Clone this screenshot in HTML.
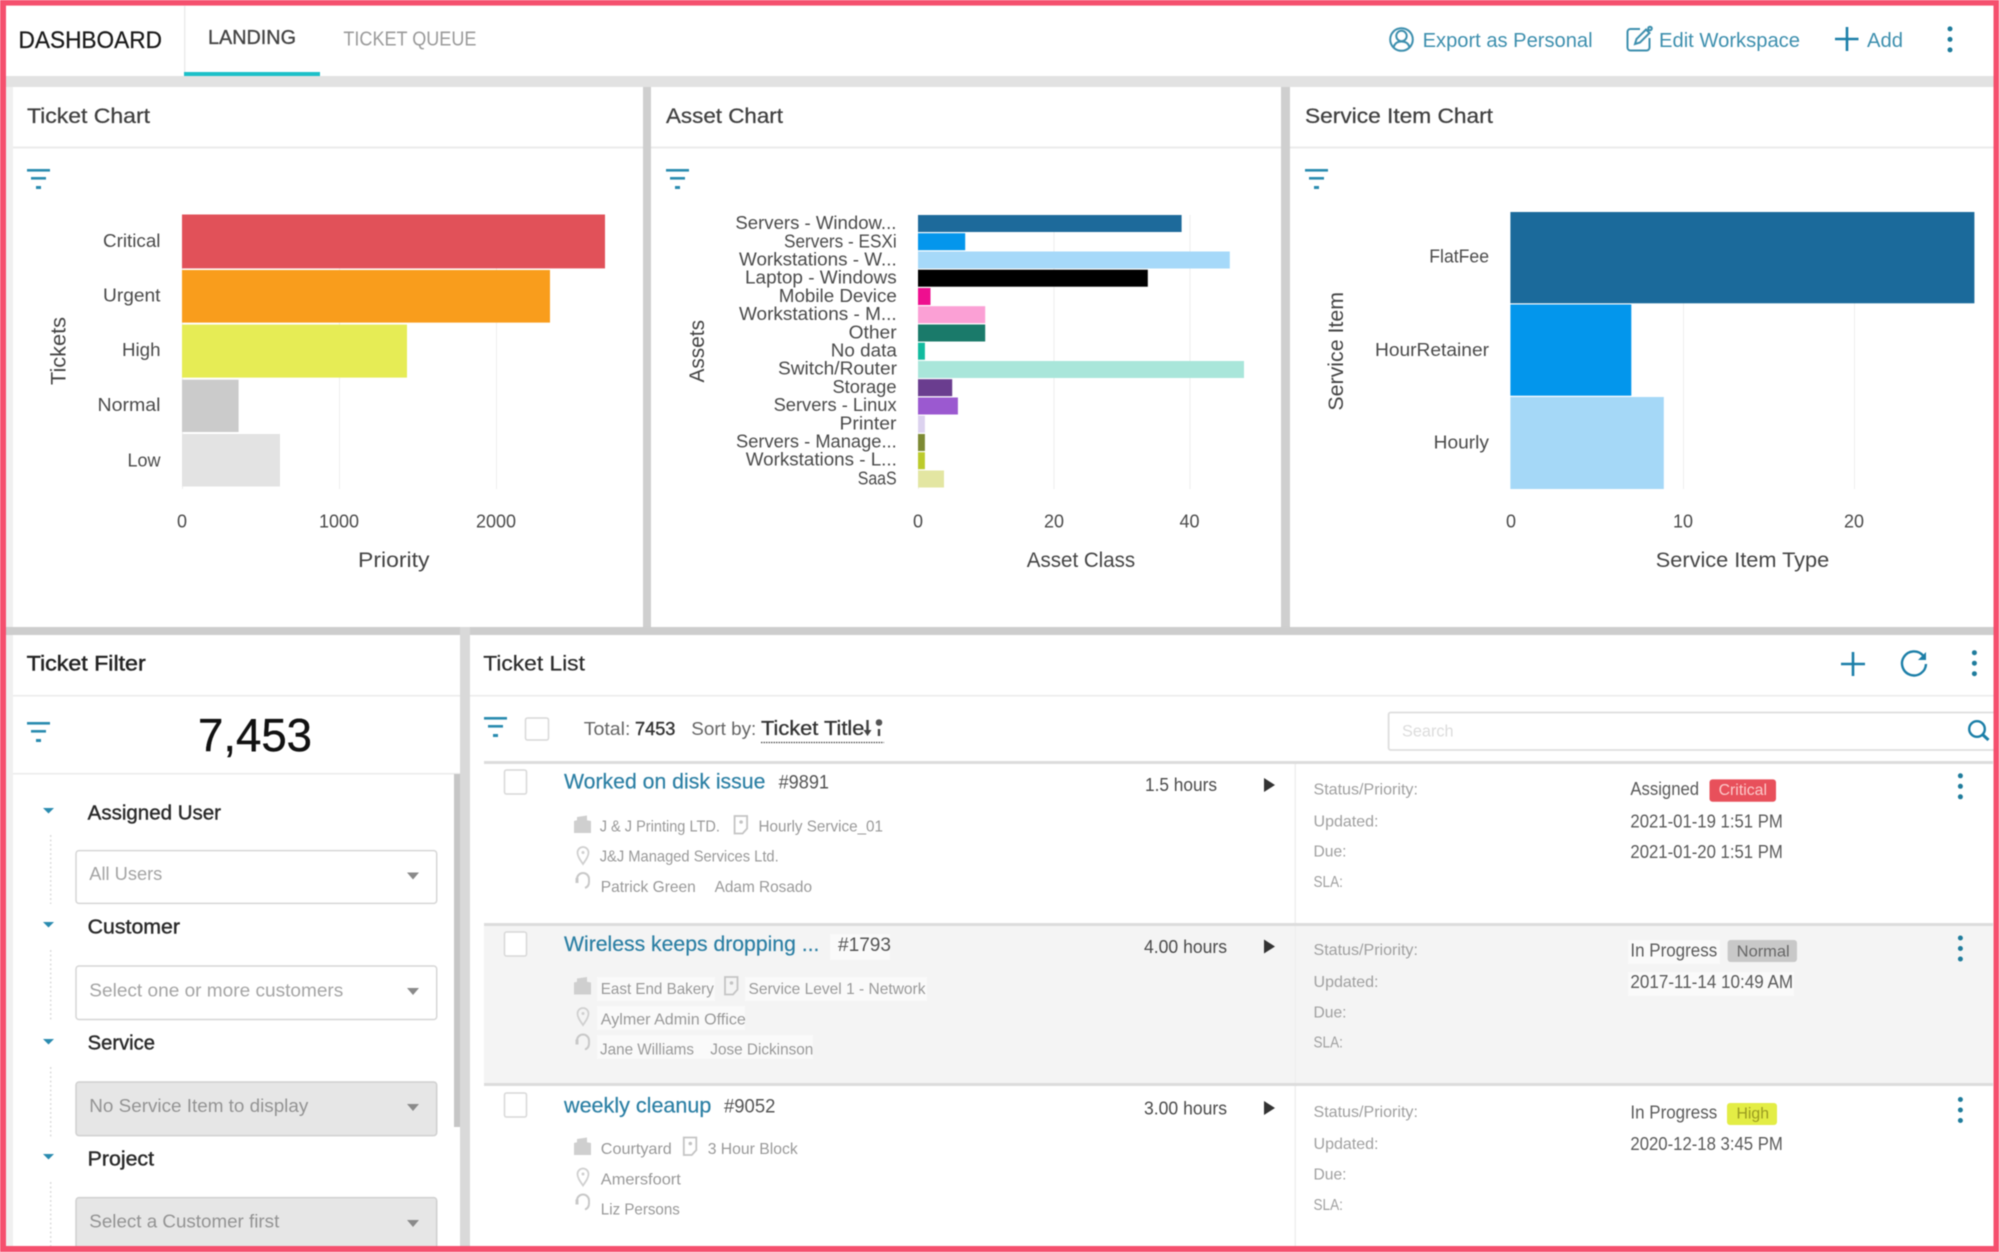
<!DOCTYPE html>
<html><head><meta charset="utf-8"><title>Dashboard</title>
<style>
html,body{margin:0;padding:0;background:#fff;width:1999px;height:1252px;overflow:hidden}
svg{display:block;filter:blur(.6px)}
text{font-family:"Liberation Sans",sans-serif;fill:#555;font-size:18px}
.t{font-size:21px;fill:#3f3f3f;stroke:#3f3f3f;stroke-width:.25px}
.a{font-size:18px;fill:#4a4a4a}
.x{font-size:21px;fill:#444}
.l{font-size:20px;fill:#2a2a2a;stroke:#2a2a2a;stroke-width:.4px}
.s{font-size:18px;fill:#a4a4a4}
.m{font-size:16px;fill:#999}
.k{font-size:16px;fill:#a0a0a0}
.v{font-size:18px;fill:#5a5a5a}
.h{font-size:21px;fill:#2b7fa4;stroke:#2b7fa4;stroke-width:.2px}
.n{font-size:19px;fill:#555}
.b{font-size:20px;fill:#3d8fae}
</style></head><body>
<svg xmlns="http://www.w3.org/2000/svg" width="1999" height="1252" viewBox="0 0 1999 1252">
<defs>
<g id="f" fill="#2a8bb0"><rect width="23" height="2.600"/><rect x="4" y="8" width="15" height="2.600"/><rect x="9" y="17" width="5" height="3"/></g>
<g id="dots" fill="#1f7c9c"><circle cy="-10.500" r="2.500"/><circle r="2.500"/><circle cy="10.500" r="2.500"/></g>
<path id="tri" d="M0 0h11l-5.500 5.500z" fill="#2a8bb0"/>
<path id="car" d="M0 0h12l-6 7z" fill="#8a8a8a"/>
<path id="play" d="M0 0l11 7-11 7z" fill="#333"/>
<path id="bld" d="M0 17.500V5.500l3-.800V1.500L13 0v4.700l4 .800v12z" fill="#cfcfcf"/>
<g id="doc" fill="none" stroke="#c4c4c4" stroke-width="1.800"><path d="M1 1h12.500v12.500L9 18.500H1z"/><circle cx="7.500" cy="7" r="1.800" fill="#c4c4c4" stroke="none"/></g>
<g id="pin" fill="none" stroke="#d0d0d0" stroke-width="1.800"><path d="M6.500 18C3 13 1 10 1 6.500a5.500 5.500 0 0 1 11 0C12 10 10 13 6.500 18z"/><circle cx="6.500" cy="6.500" r="1.500" fill="#d0d0d0" stroke="none"/></g>
<g id="hs" fill="none" stroke="#c8c8c8" stroke-width="2"><path d="M2 11V8a6 6 0 0 1 12 0v3"/><path d="M14 11c0 3-1.500 5-4 6"/><path d="M2 7v5" stroke-width="3"/></g>
<rect id="cb" width="22" height="24" rx="2" fill="#fff" stroke="#d8d8d8" stroke-width="1.500"/>
</defs>

<!-- backgrounds -->
<rect width="1999" height="1252" fill="#f0f0f0"/>
<rect y="5" width="1999" height="71" fill="#fff"/>
<rect y="76" width="1999" height="11" fill="#e2e2e2"/>
<rect x="184" y="6" width="1.500" height="70" fill="#ececec"/>
<rect x="184" y="72" width="136" height="4" fill="#1cc0c8"/>

<rect x="643" y="87" width="8" height="547" fill="#cfcfcf"/>
<rect x="1281" y="87" width="9" height="547" fill="#cfcfcf"/>
<rect y="627" width="1999" height="8" fill="#cdcdcd"/>
<rect x="460" y="627" width="10" height="625" fill="#d9d9d9"/>

<rect x="13" y="87" width="630" height="540" fill="#fff"/>
<rect x="651" y="87" width="630" height="540" fill="#fff"/>
<rect x="1290" y="87" width="709" height="540" fill="#fff"/>
<rect x="13" y="635" width="447" height="617" fill="#fff"/>
<rect x="470" y="635" width="1529" height="617" fill="#fff"/>

<g fill="#ebebeb">
<rect x="13" y="146.500" width="630" height="2"/><rect x="651" y="146.500" width="630" height="2"/><rect x="1290" y="146.500" width="709" height="2"/>
<rect x="13" y="695" width="447" height="1.500"/><rect x="470" y="695" width="1529" height="1.500"/><rect x="13" y="773" width="447" height="1.500"/>
</g>

<!-- header -->
<text x="18.500" y="48" textLength="143.500" lengthAdjust="spacingAndGlyphs" style="font-size:24.500px;fill:#1a1a1a;stroke:#1a1a1a;stroke-width:.25px">DASHBOARD</text>
<text x="208" y="44" textLength="88" lengthAdjust="spacingAndGlyphs" style="font-size:20px;fill:#444;stroke:#444;stroke-width:.35px">LANDING</text>
<text x="343.400" y="45.500" textLength="133" lengthAdjust="spacingAndGlyphs" style="font-size:20px;fill:#9a9a9a">TICKET QUEUE</text>

<g fill="none" stroke="#3d8fae" stroke-width="2">
<circle cx="1401.500" cy="39.500" r="11.300"/><circle cx="1401.500" cy="36" r="5.200"/><path d="M1393.500 47.500c1-4.500 4-6 8-6s7 1.500 8 6"/>
<path d="M1640 29h-9.500a3 3 0 0 0-3 3v15.500a3 3 0 0 0 3 3h16a3 3 0 0 0 3-3V38"/>
<path d="M1635 44l1.500-5 9.500-9.500 3.500 3.500-9.500 9.500z"/><circle cx="1650" cy="28.500" r="1.800"/>
</g>
<text class="b" x="1422.600" y="47" textLength="170" lengthAdjust="spacingAndGlyphs">Export as Personal</text>
<text class="b" x="1659" y="47" textLength="141" lengthAdjust="spacingAndGlyphs">Edit Workspace</text>
<path d="M1835 39h23.500M1847 27v24" stroke="#1c7fa8" stroke-width="2.600" fill="none"/>
<text class="b" x="1867" y="47" textLength="36" lengthAdjust="spacingAndGlyphs">Add</text>
<use href="#dots" x="1950" y="39.400"/>

<!-- ticket chart -->
<text class="t" x="27" y="123" textLength="123" lengthAdjust="spacingAndGlyphs">Ticket Chart</text>
<use href="#f" x="27" y="169"/>
<g fill="#eeeeee"><rect x="182" y="215" width="1" height="274"/><rect x="339" y="215" width="1" height="274"/><rect x="496" y="215" width="1" height="274"/></g>
<rect x="182" y="214.500" width="423" height="53.900" fill="#e15159"/>
<rect x="182" y="270" width="368" height="52.600" fill="#f99d1c"/>
<rect x="182" y="324.600" width="225" height="53" fill="#e6ec55"/>
<rect x="182" y="379.700" width="56.600" height="52.300" fill="#cbcbcb"/>
<rect x="182" y="434" width="98" height="52.500" fill="#e3e3e3"/>
<text class="a" x="103" y="247" textLength="57.500" lengthAdjust="spacingAndGlyphs">Critical</text>
<text class="a" x="103" y="301.500" textLength="57.500" lengthAdjust="spacingAndGlyphs">Urgent</text>
<text class="a" x="122" y="356" textLength="38.500" lengthAdjust="spacingAndGlyphs">High</text>
<text class="a" x="97.500" y="411" textLength="63" lengthAdjust="spacingAndGlyphs">Normal</text>
<text class="a" x="127.500" y="466.500" textLength="33" lengthAdjust="spacingAndGlyphs">Low</text>
<text class="a" x="177" y="527.500">0</text>
<text class="a" x="319" y="527.500" textLength="40" lengthAdjust="spacingAndGlyphs">1000</text>
<text class="a" x="476" y="527.500" textLength="40" lengthAdjust="spacingAndGlyphs">2000</text>
<text class="x" x="358" y="567" textLength="71.500" lengthAdjust="spacingAndGlyphs">Priority</text>
<text class="x" transform="translate(65.500 385) rotate(-90)" textLength="68" lengthAdjust="spacingAndGlyphs">Tickets</text>

<!-- asset chart -->
<text class="t" x="666" y="123" textLength="117" lengthAdjust="spacingAndGlyphs">Asset Chart</text>
<use href="#f" x="666" y="169"/>
<g fill="#eeeeee"><rect x="918" y="215" width="1" height="274"/><rect x="1053.500" y="215" width="1" height="274"/><rect x="1189.500" y="215" width="1" height="274"/></g>
<rect x="918" y="215" width="263.600" height="17" fill="#1d6a9b"/>
<rect x="918" y="233.200" width="47.200" height="17" fill="#0496ec"/>
<rect x="918" y="251.500" width="311.800" height="17" fill="#a6d9f9"/>
<rect x="918" y="269.700" width="229.800" height="17" fill="#000"/>
<rect x="918" y="288" width="12.500" height="17" fill="#ee0f8f"/>
<rect x="918" y="306.200" width="67.200" height="17" fill="#fba0d5"/>
<rect x="918" y="324.500" width="67.200" height="17" fill="#1a7a6a"/>
<rect x="918" y="342.700" width="6.900" height="17" fill="#12bb9f"/>
<rect x="918" y="361" width="326" height="17" fill="#a9e6da"/>
<rect x="918" y="379.200" width="34.200" height="17" fill="#6a3d8f"/>
<rect x="918" y="397.500" width="39.900" height="17" fill="#9b59d0"/>
<rect x="918" y="415.700" width="6.900" height="17" fill="#dcd2ef"/>
<rect x="918" y="434" width="6.900" height="17" fill="#7d8a34"/>
<rect x="918" y="452.200" width="6.900" height="17" fill="#bccb2c"/>
<rect x="918" y="470.500" width="26" height="17" fill="#e3e6a2"/>
<g transform="translate(0 -.7)">
<text class="a" x="735.400" y="229.800" textLength="161" lengthAdjust="spacingAndGlyphs">Servers - Window...</text>
<text class="a" x="784" y="248" textLength="112.700" lengthAdjust="spacingAndGlyphs">Servers - ESXi</text>
<text class="a" x="739" y="266.200" textLength="157.700" lengthAdjust="spacingAndGlyphs">Workstations - W...</text>
<text class="a" x="745" y="284.400" textLength="151.700" lengthAdjust="spacingAndGlyphs">Laptop - Windows</text>
<text class="a" x="778.800" y="302.600" textLength="118" lengthAdjust="spacingAndGlyphs">Mobile Device</text>
<text class="a" x="739" y="320.800" textLength="157.700" lengthAdjust="spacingAndGlyphs">Workstations - M...</text>
<text class="a" x="848.600" y="339" textLength="48" lengthAdjust="spacingAndGlyphs">Other</text>
<text class="a" x="830.800" y="357.200" textLength="66" lengthAdjust="spacingAndGlyphs">No data</text>
<text class="a" x="778" y="375.400" textLength="119" lengthAdjust="spacingAndGlyphs">Switch/Router</text>
<text class="a" x="832.500" y="393.600" textLength="64" lengthAdjust="spacingAndGlyphs">Storage</text>
<text class="a" x="773.600" y="411.800" textLength="123" lengthAdjust="spacingAndGlyphs">Servers - Linux</text>
<text class="a" x="839.500" y="430" textLength="57" lengthAdjust="spacingAndGlyphs">Printer</text>
<text class="a" x="736" y="448.200" textLength="160.700" lengthAdjust="spacingAndGlyphs">Servers - Manage...</text>
<text class="a" x="745.800" y="466.400" textLength="151" lengthAdjust="spacingAndGlyphs">Workstations - L...</text>
<text class="a" x="857.700" y="485" textLength="39" lengthAdjust="spacingAndGlyphs">SaaS</text>
</g>
<text class="a" x="913" y="527.500">0</text>
<text class="a" x="1044" y="527.500" textLength="20" lengthAdjust="spacingAndGlyphs">20</text>
<text class="a" x="1179.500" y="527.500" textLength="20" lengthAdjust="spacingAndGlyphs">40</text>
<text class="x" x="1026.800" y="567" textLength="108.400" lengthAdjust="spacingAndGlyphs">Asset Class</text>
<text class="x" transform="translate(704 382.500) rotate(-90)" textLength="62.500" lengthAdjust="spacingAndGlyphs">Assets</text>

<!-- service chart -->
<text class="t" x="1305" y="123" textLength="188" lengthAdjust="spacingAndGlyphs">Service Item Chart</text>
<use href="#f" x="1305" y="169"/>
<g fill="#eeeeee"><rect x="1683" y="213" width="1" height="276"/><rect x="1854" y="213" width="1" height="276"/></g>
<rect x="1510.400" y="212" width="464" height="91.300" fill="#1b6a9b"/>
<rect x="1510.400" y="304.500" width="120.900" height="91.200" fill="#0396ec"/>
<rect x="1510.400" y="397" width="153.400" height="92" fill="#a5d8f7"/>
<text class="a" x="1429.300" y="262.500" textLength="59.700" lengthAdjust="spacingAndGlyphs">FlatFee</text>
<text class="a" x="1375" y="355.800" textLength="114" lengthAdjust="spacingAndGlyphs">HourRetainer</text>
<text class="a" x="1433.700" y="448.300" textLength="55.300" lengthAdjust="spacingAndGlyphs">Hourly</text>
<text class="a" x="1506" y="527.500">0</text>
<text class="a" x="1673" y="527.500" textLength="20" lengthAdjust="spacingAndGlyphs">10</text>
<text class="a" x="1844" y="527.500" textLength="20" lengthAdjust="spacingAndGlyphs">20</text>
<text class="x" x="1655.800" y="567" textLength="173.400" lengthAdjust="spacingAndGlyphs">Service Item Type</text>
<text class="x" transform="translate(1343 410.600) rotate(-90)" textLength="118.600" lengthAdjust="spacingAndGlyphs">Service Item</text>

<!-- ticket filter -->
<text class="t" x="26.700" y="670.300" textLength="119" lengthAdjust="spacingAndGlyphs" style="fill:#222;stroke:#222;stroke-width:.45px">Ticket Filter</text>
<use href="#f" x="27" y="722"/>
<text x="198" y="751" textLength="114" lengthAdjust="spacingAndGlyphs" style="font-size:46px;fill:#111;stroke:#111;stroke-width:.4px">7,453</text>
<rect x="454" y="774" width="6" height="353" fill="#c6c6c6"/>
<g stroke="#dcdcdc" stroke-width="1.500" stroke-dasharray="2 2.500"><path d="M50.700 835v69M50.700 950v70M50.700 1067v70M50.700 1182v64"/></g>
<use href="#tri" x="43" y="808"/><use href="#tri" x="43" y="922"/><use href="#tri" x="43" y="1039"/><use href="#tri" x="43" y="1154"/>
<text class="l" x="87.700" y="819.300" textLength="133.300" lengthAdjust="spacingAndGlyphs">Assigned User</text>
<text class="l" x="87.700" y="933.700" textLength="92.300" lengthAdjust="spacingAndGlyphs">Customer</text>
<text class="l" x="87.700" y="1049.700" textLength="67.300" lengthAdjust="spacingAndGlyphs">Service</text>
<text class="l" x="87.700" y="1165.300" textLength="66.300" lengthAdjust="spacingAndGlyphs">Project</text>
<rect x="76" y="850.600" width="360.700" height="52.800" rx="3" fill="#fff" stroke="#d6d6d6" stroke-width="1.500"/>
<rect x="76" y="966" width="360.700" height="53.500" rx="3" fill="#fff" stroke="#d6d6d6" stroke-width="1.500"/>
<rect x="76" y="1082" width="360.700" height="53.600" rx="3" fill="#e6e6e6" stroke="#d0d0d0" stroke-width="1.500"/>
<rect x="76" y="1197.600" width="360.700" height="70" rx="3" fill="#e6e6e6" stroke="#d0d0d0" stroke-width="1.500"/>
<text class="s" x="89.300" y="879.800" textLength="73" lengthAdjust="spacingAndGlyphs">All Users</text>
<text class="s" x="89.300" y="996.400" textLength="254" lengthAdjust="spacingAndGlyphs">Select one or more customers</text>
<text class="s" x="89.300" y="1111.800" textLength="219" lengthAdjust="spacingAndGlyphs" style="fill:#939393">No Service Item to display</text>
<text class="s" x="89.300" y="1227.400" textLength="190" lengthAdjust="spacingAndGlyphs" style="fill:#939393">Select a Customer first</text>
<use href="#car" x="407" y="872.500"/><use href="#car" x="407" y="988"/><use href="#car" x="407" y="1104"/><use href="#car" x="407" y="1220"/>

<!-- ticket list head -->
<text class="t" x="483.300" y="670.300" textLength="101.600" lengthAdjust="spacingAndGlyphs" style="fill:#2a2a2a">Ticket List</text>
<path d="M1841 664h24M1853 652v24" stroke="#1c7fa8" stroke-width="2.600" fill="none"/>
<path d="M1923 655.500a12 12 0 1 0 3 8.500" stroke="#1c7fa8" stroke-width="2.400" fill="none"/><path d="M1926 652v8h-8z" fill="#1c7fa8"/>
<use href="#dots" x="1974.400" y="663.200"/>
<use href="#f" x="484" y="717"/>
<rect x="525.500" y="718" width="23" height="22" rx="2" fill="#fff" stroke="#d8d8d8" stroke-width="1.500"/>
<text x="583.800" y="735" textLength="46.600" lengthAdjust="spacingAndGlyphs" style="font-size:18px;fill:#666">Total:</text>
<text x="635" y="735" textLength="40.400" lengthAdjust="spacingAndGlyphs" style="font-size:18px;fill:#333;stroke:#333;stroke-width:.4px">7453</text>
<text x="691.300" y="735" textLength="65" lengthAdjust="spacingAndGlyphs" style="font-size:18px;fill:#666">Sort by:</text>
<text x="761" y="735" textLength="103.400" lengthAdjust="spacingAndGlyphs" style="font-size:20px;fill:#333;stroke:#333;stroke-width:.3px">Ticket Title</text>
<path d="M867.500 720v12" stroke="#444" stroke-width="2.400"/><path d="M863.500 730h8l-4 6z" fill="#444"/>
<circle cx="879" cy="722.500" r="2.800" fill="#555" stroke="#555" stroke-width="1"/><path d="M879 729v7" stroke="#444" stroke-width="2.400"/>
<path d="M761 742.500h123" stroke="#444" stroke-width="1.200" stroke-dasharray="1.500 1"/>
<rect x="1388.600" y="712.500" width="620" height="37.500" rx="2" fill="#fff" stroke="#dedede" stroke-width="1.800"/>
<text x="1402" y="736.500" textLength="51.600" lengthAdjust="spacingAndGlyphs" style="font-size:17px;fill:#dcdcdc">Search</text>
<circle cx="1977" cy="729" r="7.800" fill="none" stroke="#1c7fa8" stroke-width="2.400"/><path d="M1982.500 734.500l6 5.500" stroke="#1c7fa8" stroke-width="3"/>

<!-- rows -->
<rect x="484" y="924" width="1509" height="160" fill="#f4f4f4"/>
<rect x="1294.500" y="763" width="1.500" height="483" fill="#efefef"/>
<rect x="484" y="761" width="1509" height="3" fill="#dcdcdc"/>
<rect x="484" y="923" width="1509" height="3" fill="#dcdcdc"/>
<rect x="484" y="1083" width="1509" height="3" fill="#dcdcdc"/>

<!-- white halos of row 2 -->
<g fill="#fafafa">
<rect x="830" y="934" width="60" height="26"/><rect x="597" y="977" width="118" height="24"/><rect x="745" y="977" width="182" height="24"/><rect x="597" y="1006" width="148" height="24"/><rect x="597" y="1035" width="216" height="24"/><rect x="1628" y="972" width="166" height="24"/><rect x="1628" y="940" width="92" height="24"/>
</g>

<!-- row 1 -->
<use href="#cb" x="504.500" y="770"/>
<text class="h" x="564" y="788.500" textLength="201.400" lengthAdjust="spacingAndGlyphs">Worked on disk issue</text>
<text class="n" x="778.600" y="788.500" textLength="50.400" lengthAdjust="spacingAndGlyphs">#9891</text>
<text class="a" x="1145" y="791" textLength="72" lengthAdjust="spacingAndGlyphs">1.5 hours</text>
<use href="#play" x="1264" y="778"/>
<use href="#bld" x="574" y="815.500"/><use href="#doc" x="733.600" y="815"/><use href="#pin" x="576.500" y="846"/><use href="#hs" x="575" y="871"/>
<text class="m" x="599.700" y="831.500" textLength="120.200" lengthAdjust="spacingAndGlyphs">J &amp; J Printing LTD.</text>
<text class="m" x="758.500" y="831.500" textLength="124.500" lengthAdjust="spacingAndGlyphs">Hourly Service_01</text>
<text class="m" x="599.700" y="861.500" textLength="179" lengthAdjust="spacingAndGlyphs">J&amp;J Managed Services Ltd.</text>
<text class="m" x="600.800" y="892" textLength="95" lengthAdjust="spacingAndGlyphs">Patrick Green</text>
<text class="m" x="714.600" y="892" textLength="97.400" lengthAdjust="spacingAndGlyphs">Adam Rosado</text>
<text class="k" x="1313.500" y="794.500" textLength="104.400" lengthAdjust="spacingAndGlyphs">Status/Priority:</text>
<text class="k" x="1313.500" y="826.500" textLength="65" lengthAdjust="spacingAndGlyphs">Updated:</text>
<text class="k" x="1313.500" y="856.500" textLength="33" lengthAdjust="spacingAndGlyphs">Due:</text>
<text class="k" x="1313.500" y="887" textLength="29.400" lengthAdjust="spacingAndGlyphs">SLA:</text>
<text class="v" x="1630.400" y="795" textLength="68.700" lengthAdjust="spacingAndGlyphs">Assigned</text>
<rect x="1709.500" y="779.400" width="66.500" height="22.300" rx="3" fill="#e8505b"/>
<text x="1718.600" y="795" textLength="48.400" lengthAdjust="spacingAndGlyphs" style="font-size:16px;fill:#fbc9c9">Critical</text>
<text class="v" x="1630.400" y="827.500" textLength="152.400" lengthAdjust="spacingAndGlyphs">2021-01-19 1:51 PM</text>
<text class="v" x="1630.400" y="858" textLength="152.400" lengthAdjust="spacingAndGlyphs">2021-01-20 1:51 PM</text>
<use href="#dots" x="1960.400" y="786.300"/>

<!-- row 2 -->
<use href="#cb" x="504.500" y="932"/>
<text class="h" x="564" y="950.800" textLength="255.400" lengthAdjust="spacingAndGlyphs">Wireless keeps dropping ...</text>
<text class="n" x="838" y="950.800" textLength="53" lengthAdjust="spacingAndGlyphs">#1793</text>
<text class="a" x="1144" y="953" textLength="83" lengthAdjust="spacingAndGlyphs">4.00 hours</text>
<use href="#play" x="1264" y="939.500"/>
<use href="#bld" x="574" y="977"/><use href="#doc" x="724" y="976"/><use href="#pin" x="576.500" y="1007"/><use href="#hs" x="575" y="1032.500"/>
<text class="m" x="600.800" y="994" textLength="113" lengthAdjust="spacingAndGlyphs">East End Bakery</text>
<text class="m" x="748.500" y="994" textLength="177" lengthAdjust="spacingAndGlyphs">Service Level 1 - Network</text>
<text class="m" x="600.800" y="1024.500" textLength="145" lengthAdjust="spacingAndGlyphs">Aylmer Admin Office</text>
<text class="m" x="600" y="1054.500" textLength="94" lengthAdjust="spacingAndGlyphs">Jane Williams</text>
<text class="m" x="710.300" y="1054.500" textLength="103" lengthAdjust="spacingAndGlyphs">Jose Dickinson</text>
<text class="k" x="1313.500" y="955" textLength="104.400" lengthAdjust="spacingAndGlyphs">Status/Priority:</text>
<text class="k" x="1313.500" y="987" textLength="65" lengthAdjust="spacingAndGlyphs">Updated:</text>
<text class="k" x="1313.500" y="1017.500" textLength="33" lengthAdjust="spacingAndGlyphs">Due:</text>
<text class="k" x="1313.500" y="1047.300" textLength="29.400" lengthAdjust="spacingAndGlyphs">SLA:</text>
<text class="v" x="1630.400" y="956.500" textLength="86.800" lengthAdjust="spacingAndGlyphs">In Progress</text>
<rect x="1727.600" y="940" width="69.400" height="22" rx="3" fill="#c8c8c8"/>
<text x="1736.700" y="956.500" textLength="53" lengthAdjust="spacingAndGlyphs" style="font-size:16px;fill:#666">Normal</text>
<text class="v" x="1630.400" y="988" textLength="162.700" lengthAdjust="spacingAndGlyphs">2017-11-14 10:49 AM</text>
<use href="#dots" x="1960.400" y="948.500"/>

<!-- row 3 -->
<use href="#cb" x="504.500" y="1093"/>
<text class="h" x="564" y="1112.300" textLength="147.400" lengthAdjust="spacingAndGlyphs">weekly cleanup</text>
<text class="n" x="724" y="1112.300" textLength="51.400" lengthAdjust="spacingAndGlyphs">#9052</text>
<text class="a" x="1144" y="1114.500" textLength="83" lengthAdjust="spacingAndGlyphs">3.00 hours</text>
<use href="#play" x="1264" y="1101"/>
<use href="#bld" x="574" y="1137.500"/><use href="#doc" x="682.800" y="1136.500"/><use href="#pin" x="576.500" y="1167.500"/><use href="#hs" x="575" y="1192.500"/>
<text class="m" x="600.800" y="1154" textLength="71" lengthAdjust="spacingAndGlyphs">Courtyard</text>
<text class="m" x="707.700" y="1154" textLength="90" lengthAdjust="spacingAndGlyphs">3 Hour Block</text>
<text class="m" x="600.800" y="1184.500" textLength="80" lengthAdjust="spacingAndGlyphs">Amersfoort</text>
<text class="m" x="600.800" y="1214.500" textLength="79" lengthAdjust="spacingAndGlyphs">Liz Persons</text>
<text class="k" x="1313.500" y="1117" textLength="104.400" lengthAdjust="spacingAndGlyphs">Status/Priority:</text>
<text class="k" x="1313.500" y="1149" textLength="65" lengthAdjust="spacingAndGlyphs">Updated:</text>
<text class="k" x="1313.500" y="1179.500" textLength="33" lengthAdjust="spacingAndGlyphs">Due:</text>
<text class="k" x="1313.500" y="1209.800" textLength="29.400" lengthAdjust="spacingAndGlyphs">SLA:</text>
<text class="v" x="1630.400" y="1118.500" textLength="86.800" lengthAdjust="spacingAndGlyphs">In Progress</text>
<rect x="1727" y="1103" width="50" height="22" rx="3" fill="#e3ed45"/>
<text x="1736.500" y="1118.500" textLength="32.500" lengthAdjust="spacingAndGlyphs" style="font-size:16px;fill:#9a9b20">High</text>
<text class="v" x="1630.400" y="1150.200" textLength="152.400" lengthAdjust="spacingAndGlyphs">2020-12-18 3:45 PM</text>
<use href="#dots" x="1960.400" y="1110"/>

<!-- outer pink frame -->
<rect x="0" y="0" width="1999" height="5.600" fill="#f5506e"/>
<rect x="0" y="1246" width="1999" height="6" fill="#f5506e"/>
<rect x="0" y="0" width="6" height="1252" fill="#f5506e"/>
<rect x="1993.500" y="0" width="5.500" height="1252" fill="#f5506e"/>
</svg>
</body></html>
